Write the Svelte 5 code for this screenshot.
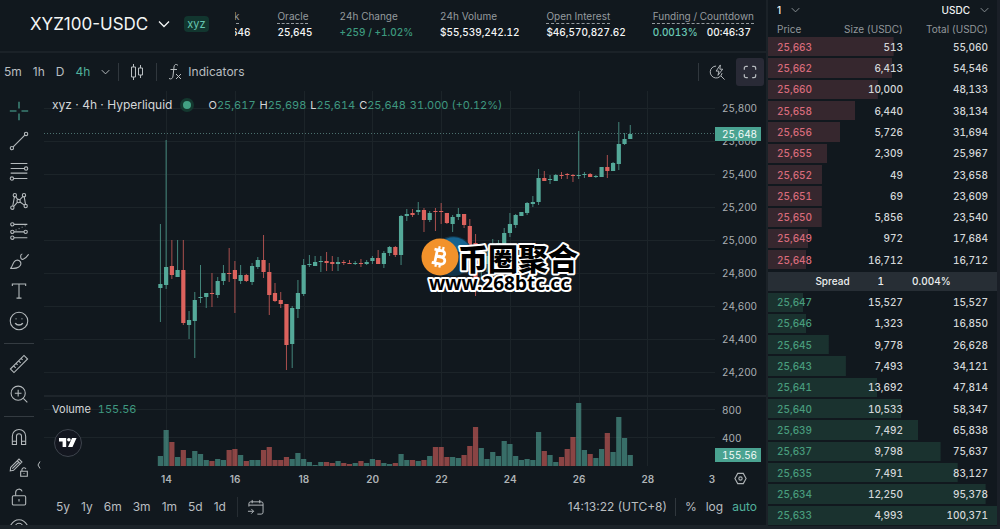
<script>
  // Each candle: high, body top, body bottom, low (plot units), direction
  const candles = [
    [224, 284, 288, 322, 1], [140, 267, 285, 289, 1], [240, 266, 275, 279, 0], [240, 270, 277, 277, 1],
    [240, 270, 323, 325, 0], [311, 320, 325, 339, 1], [292, 300, 321, 358, 1], [265, 297, 298, 303, 1],
    [293, 293, 297, 308, 1], [273, 293, 294, 307, 0], [277, 281, 295, 298, 1], [265, 273, 281, 285, 1],
    [248, 273, 274, 282, 0], [261, 270, 279, 313, 0], [265, 275, 281, 284, 1], [274, 275, 281, 282, 0],
    [263, 266, 282, 285, 1], [257, 260, 267, 269, 1], [235, 260, 272, 278, 0], [263, 272, 295, 315, 0],
    [283, 293, 301, 302, 0], [292, 300, 304, 308, 0], [304, 304, 345, 370, 0], [306, 308, 344, 368, 1],
    [280, 293, 309, 318, 1], [259, 265, 294, 296, 1], [255, 264, 265, 267, 1], [256, 262, 266, 266, 1],
    [256, 261, 262, 272, 1], [252, 261, 263, 271, 0], [256, 262, 264, 271, 0], [257, 262, 264, 271, 1],
    [260, 262, 263, 265, 0], [260, 263, 264, 264, 0], [261, 263, 264, 265, 1], [259, 263, 264, 267, 0],
    [260, 262, 264, 265, 1], [256, 258, 261, 264, 1], [250, 258, 264, 264, 0], [251, 253, 264, 268, 1],
    [246, 247, 253, 256, 1], [246, 247, 255, 257, 0], [215, 216, 255, 265, 1], [209, 214, 216, 221, 1],
    [209, 213, 215, 217, 0], [202, 210, 212, 215, 1], [208, 210, 220, 232, 0], [211, 213, 220, 222, 1],
    [208, 211, 212, 231, 0], [203, 211, 212, 224, 0], [213, 213, 223, 224, 0], [215, 217, 224, 232, 1],
    [208, 214, 217, 220, 1], [214, 214, 225, 228, 0], [219, 226, 245, 247, 0], [234, 243, 283, 296, 0],
    [252, 262, 272, 280, 1], [250, 256, 264, 272, 1], [239, 250, 258, 262, 1], [240, 243, 252, 256, 1],
    [228, 233, 244, 247, 1], [213, 224, 233, 237, 1], [214, 215, 225, 228, 1], [212, 212, 216, 216, 1],
    [202, 203, 213, 215, 1], [196, 202, 204, 207, 1], [169, 178, 202, 205, 1], [171, 178, 181, 181, 0],
    [175, 179, 180, 184, 1], [174, 175, 181, 181, 1], [172, 175, 176, 179, 0], [173, 174, 175, 179, 0],
    [174, 175, 176, 182, 0], [131, 175, 176, 179, 1], [172, 174, 175, 178, 1], [173, 174, 177, 177, 0],
    [175, 176, 177, 178, 1], [167, 167, 177, 177, 1], [155, 167, 171, 178, 0], [162, 163, 171, 171, 1],
    [122, 144, 164, 170, 1], [133, 139, 144, 145, 1], [125, 134, 139, 139, 1],
  ];
  const volumes = [
    10, 36, 24, 9, 16, 8, 15, 12, 6, 5, 7, 6, 16, 17, 11, 5, 6, 6, 16, 19, 6, 6, 9, 7, 13, 7, 4, 1, 4, 4, 3,
    5, 3, 2, 3, 5, 3, 7, 6, 3, 2, 3, 12, 6, 6, 5, 6, 10, 19, 19, 9, 9, 8, 11, 20, 39, 18, 7, 14, 10, 25, 22,
    10, 6, 7, 6, 34, 15, 11, 4, 9, 17, 29, 63, 16, 12, 8, 17, 33, 14, 49, 28, 11,
  ];
  const step = 5.73;
  const cx = (i) => 160.4 + step * i;
  const days = [14, 16, 18, 20, 22, 24, 26, 28];
  const gridX = days.map((_, i) => Math.round(166 + i * 68.76) + 0.5);
  const gridY = Array.from({ length: 9 }, (_, i) => Math.round(108 + i * 32.95) + 0.5);
  const prices = ['25,800', '25,600', '25,400', '25,200', '25,000', '24,800', '24,600', '24,400', '24,200'];

  const asks = [
    ['25,663', '513', '55,060'], ['25,662', '6,413', '54,546'], ['25,660', '10,000', '48,133'],
    ['25,658', '6,440', '38,134'], ['25,656', '5,726', '31,694'], ['25,655', '2,309', '25,967'],
    ['25,652', '49', '23,658'], ['25,651', '69', '23,609'], ['25,650', '5,856', '23,540'],
    ['25,649', '972', '17,684'], ['25,648', '16,712', '16,712'],
  ];
  const bids = [
    ['25,647', '15,527', '15,527'], ['25,646', '1,323', '16,850'], ['25,645', '9,778', '26,628'],
    ['25,643', '7,493', '34,121'], ['25,641', '13,692', '47,814'], ['25,640', '10,533', '58,347'],
    ['25,639', '7,492', '65,838'], ['25,637', '9,798', '75,637'], ['25,635', '7,491', '83,127'],
    ['25,634', '12,250', '95,378'], ['25,633', '4,993', '100,371'],
  ];
  const num = (s) => Number(s.replace(/,/g, ''));
  const depth = (total) => `${(num(total) / 100371) * 100}%`;

  // Icon drawings on a 24 unit grid
  const toolGroups = [
    [
      ['Crosshair', '<path d="M12 1v8M12 15v8M1 12h8M15 12h8"/>'],
      ['Trend line', '<circle cx="3.500" cy="20.500" r="2"/><circle cx="20.500" cy="3.500" r="2"/><path d="M5 19 19 5"/>'],
      ['Fib retracement', '<path d="M2 3h20M2 9h16M2 14.500h20M6 21h16"/><circle cx="20.500" cy="9" r="2"/><circle cx="3.500" cy="21" r="2"/>'],
      ['Pattern', '<circle cx="4" cy="20" r="2"/><circle cx="7" cy="5" r="2"/><circle cx="11.500" cy="12" r="2"/><circle cx="18" cy="5" r="2"/><circle cx="20" cy="18" r="2"/><path d="m4.500 18 2-11M8 6.800l2.500 3.500M13 10.500l3.800-4M18.300 7l1.500 9M13.200 13.200l5.200 3.700M5.500 18.700l4.700-5.300"/>'],
      ['Forecast', '<circle cx="4" cy="4" r="2"/><path d="M6 4h16M6 13h12M6 20h16"/><circle cx="4" cy="13" r="2"/><circle cx="20" cy="13" r="2"/><circle cx="4" cy="20" r="2"/><path stroke-dasharray="1 3" d="m8 11 13-6"/>'],
      ['Brush', '<path d="M1.500 21c3-1 2.500-9 7.500-10 4-.6 6.500 3 4.500 6.500C11.500 21 7 21 1.500 21ZM14 6.500c0 6 5 4 9.500-2.500M14 6.500c0-2 1-3 2-3"/>'],
      ['Text', '<path d="M4 6V3.500h16V6M12 3.500v17M9 20.500h6"/>'],
      ['Emoji', '<circle cx="12" cy="12" r="10.500"/><path d="M7.500 14.500c2 3 7 3 9 0M8.500 9v1M15.500 9v1" stroke-width="1.800"/>'],
    ],
    [
      ['Measure', '<path d="M1.700 18 18 1.700 22.300 6 6 22.300ZM5.500 14.200l2.500 2.500M8.500 11.200l1.800 1.800M11.500 8.200l2.500 2.500M14.500 5.200 16.300 7"/>'],
      ['Zoom in', '<circle cx="11" cy="11" r="8.500"/><path d="M11 7v8M7 11h8M17.200 17.200 22 22"/>'],
    ],
    [
      ['Magnet', '<path d="M4 21V11a8 8 0 0 1 16 0v10h-5V11a3 3 0 0 0-6 0v10ZM4 17h5M15 17h5"/>'],
      ['Lock drawing', '<path d="m2 12.500 10-10 3.500 3.500-10 10-4 .7ZM10 4.500 13.500 8M4 14l8-8M14 17h8v6h-8ZM15.500 17v-2a2.500 2.500 0 0 1 4.800-.6M18 19.500v1"/>'],
      ['Lock all', '<rect x="4" y="10.500" width="16" height="11" rx="1.500"/><path d="M8 10.500V6.500a4 4 0 0 1 7.800-1.200M12 14.500v3" />'],
      ['Hide', '<path d="M2 10c5-9 15-9 20 0M7.500 12a4.500 4.500 0 0 1 9 0"/>'],
    ],
  ];
  const stats = [
    { label: 'Oracle', value: '25,645', hint: true },
    { label: '24h Change', value: '+259 / +1.02%', tone: 'up' },
    { label: '24h Volume', value: '$55,539,242.12' },
    { label: 'Open Interest', value: '$46,570,827.62', hint: true },
  ];
  const ranges = ['5y', '1y', '6m', '3m', '1m', '5d', '1d'];
</script>

{#snippet chevron()}
  <svg class="chevron" viewBox="0 0 12 8" aria-hidden="true"><path d="m1 1.500 5 5 5-5" /></svg>
{/snippet}

{#snippet rows(list, side)}
  <tbody class={side}>
    {#each list as [price, size, total]}
      <tr style:--depth={depth(total)}><td class="price">{price}</td><td>{size}</td><td>{total}</td></tr>
    {/each}
  </tbody>
{/snippet}

<div class="page">
  <main>
    <header>
      <button class="market"><span>XYZ100-USDC</span>{@render chevron()}</button>
      <span class="badge">xyz</span>
      <dl>
        <div><dt><u>Mark</u></dt><dd>25,646</dd></div>
        {#each stats as s}
          <div><dt>{#if s.hint}<u>{s.label}</u>{:else}{s.label}{/if}</dt><dd class={s.tone}>{s.value}</dd></div>
        {/each}
        <div><dt><u>Funding / Countdown</u></dt><dd class="funding"><span>0.0013%</span><span>00:46:37</span></dd></div>
      </dl>
    </header>

    <div class="chart-bar">
      <div class="frames">
        <button>5m</button><button>1h</button><button>D</button><button class="on">4h</button>
        <button class="more" aria-label="More intervals">{@render chevron()}</button>
      </div>
      <button class="split style" aria-label="Candles">
        <svg viewBox="0 0 14 18"><path d="M3.500 1v3M3.500 14v3M1.500 4h4v10h-4ZM10.500 2v3M10.500 12v3M8.500 5h4v7h-4Z" /></svg>
      </button>
      <button class="split indicators">
        <svg viewBox="0 0 14 18"><path d="M10 2.500C8 .5 6.300 1.500 6 4L5 13c-.3 2.700-1.800 3.500-4 2.500M2.500 6.500h6.500M8 11l5 5M13 11l-5 5" /></svg>
        Indicators
      </button>
      <div class="right">
        <button class="quick" aria-label="Quick search">
          <svg viewBox="0 0 18 18"><path d="M7.500 2.200a6.300 6.300 0 1 0 6.300 7.500M12.500 12.500l4 4M12 1 7.500 7.500h3L9.500 12l5-6.500h-3Z" /></svg>
        </button>
        <button class="full" aria-label="Fullscreen">
          <svg viewBox="0 0 16 16"><path d="M1.500 5.500v-2a2 2 0 0 1 2-2h2M10.500 1.500h2a2 2 0 0 1 2 2v2M14.500 10.500v2a2 2 0 0 1-2 2h-2M5.500 14.500h-2a2 2 0 0 1-2-2v-2" /></svg>
        </button>
      </div>
    </div>

    <div class="workspace">
      <nav>
        {#each toolGroups as group}
          <div class="group">
            {#each group as [name, art]}
              <button aria-label={name} class:cross={name === 'Crosshair'}><svg viewBox="0 0 24 24">{@html art}</svg></button>
            {/each}
          </div>
        {/each}
        <button class="fold" aria-label="Collapse tools"><svg viewBox="0 0 6 10"><path d="M4 1.500 2 5l2 3.500" /></svg></button>
      </nav>

      <section class="chart">
        <div class="panes">
          <div class="plot">
            <svg viewBox="44 91 671 375" preserveAspectRatio="none" aria-hidden="true">
              <g class="grid">
                {#each gridX as x}<path d="M{x} 91V466" />{/each}
                {#each gridY as y}<path d="M44 {y}H715" />{/each}
                <path d="M44 409.500H715M44 437.500H715" />
              </g>
              {#each candles as [hi, top, bottom, lo, up], i}
                <g class={up ? 'rise' : 'fall'}>
                  <rect class="vol" x={cx(i) - 2.6} y={466 - volumes[i]} width="5.200" height={volumes[i]} />
                  <rect class="wick" x={cx(i) - 0.5} y={hi} width="1" height={lo - hi} />
                  <rect class="body" x={cx(i) - 2.1} y={top} width="4.200" height={Math.max(bottom - top, 1)} />
                </g>
              {/each}
              <path class="last" d="M44 133.500H715" />
            </svg>
            <div class="legend">
              <span>xyz · 4h · Hyperliquid</span><i></i>
              <p><span>O<b>25,617</b></span><span>H<b>25,698</b></span><span>L<b>25,614</b></span><span>C<b>25,648</b></span><b>31.000 (+0.12%)</b></p>
            </div>
            <div class="vol-legend">Volume <b>155.56</b></div>
            <a class="tv" href="#chart" aria-label="Chart provider">
              <svg viewBox="0 0 20 12"><path d="M0 1h8v10H4V5H0ZM14.500 1H19.500L15 11h-5Z" /><circle cx="11" cy="3" r="2" /></svg>
            </a>
          </div>
          <div class="axis">
            <div class="prices">{#each prices as p}<span>{p}</span>{/each}</div>
            <div class="vols"><span>800</span><span>400</span></div>
            <output class="tag now">25,648</output>
            <output class="tag vol-now">155.56</output>
          </div>
        </div>
        <div class="times">
          <div class="days">{#each days as d}<span>{d}</span>{/each}<span class="next">3</span></div>
          <button aria-label="Scale settings"><svg viewBox="0 0 14 14"><path d="M4 1.500h6L13 7l-3 5.500H4L1 7Z" /><circle cx="7" cy="7" r="1.800" /></svg></button>
        </div>
        <div class="ranges">
          {#each ranges as r}<button>{r}</button>{/each}
          <button class="goto" aria-label="Go to date">
            <svg viewBox="0 0 18 18"><path d="M2 8V5a2 2 0 0 1 2-2h11a2 2 0 0 1 2 2v9a2 2 0 0 1-2 2h-4M2 6.500h15M5.500 1v3.500M13.500 1v3.500M1 13h6M4.500 10.500 7 13l-2.500 2.500" /></svg>
          </button>
          <div class="scale"><button class="clock">14:13:22 (UTC+8)</button><button>%</button><button>log</button><button class="on">auto</button></div>
        </div>
        <svg class="mark" viewBox="0 0 166 64">
          <circle cx="33" cy="25" r="20" class="shade" />
          <path d="M20 12a19 19 0 0 1 28 1l-2 7H24Z" class="blue" />
          <circle cx="20" cy="26" r="18.500" class="coin" />
          <g transform="rotate(12 20 26)" class="symbol">
            <path d="M16 18.500v15M16 19.500h5a3 3 0 0 1 0 6h-5M16 25.900h6a3.500 3.500 0 0 1 0 7h-6M13 19.500h4M13 32.900h4" />
            <path class="pins" d="M17.500 15.500v4M21.500 15.500v4M17.500 32.500v4M21.500 32.500v4" />
          </g>
          <text x="38" y="39" class="name">币圈聚合</text>
          <text x="9" y="59" class="site">www.268btc.cc</text>
        </svg>
      </section>
    </div>
  </main>

  <aside>
    <div class="choices">
      <label><select aria-label="Price grouping"><option>1</option></select>{@render chevron()}</label>
      <label class="unit"><select aria-label="Unit"><option>USDC</option></select>{@render chevron()}</label>
    </div>
    <table>
      <thead><tr><th>Price</th><th>Size (USDC)</th><th>Total (USDC)</th></tr></thead>
      {@render rows(asks, 'asks')}
      <tbody class="spread"><tr><td>Spread</td><td>1</td><td>0.004%</td></tr></tbody>
      {@render rows(bids, 'bids')}
    </table>
  </aside>
</div>

<style>
  :global(body) { background: #1b2228; }
  .page {
    display: grid;
    grid-template-columns: minmax(0, 1fr) 232px;
    gap: 2px;
    height: 100vh;
    min-height: 480px;
    font: 10px/14px Inter, "Noto Sans CJK SC", sans-serif;
    color: #d4d7d9;
    --bg: #11181e;
    --line: #1e252b;
    --teal: #50b09c;
  }
  button, select { font: inherit; color: inherit; background: none; border: 0; padding: 0; margin: 0; }
  button { cursor: pointer; display: flex; align-items: center; justify-content: center; }
  svg { display: block; fill: none; stroke: currentColor; }
  main { display: flex; flex-direction: column; min-height: 0; margin-bottom: 4px; }
  header {
    display: flex; align-items: center; height: 48px; flex: none;
    background: var(--bg); padding: 0 12px 3px 30px; margin-bottom: 2px;
  }
  .market { font-size: 17px; line-height: 24px; gap: 10px; color: #f3f5f5; white-space: nowrap; }
  .market .chevron { width: 12px; height: 8px; }
  .chevron { width: 9px; height: 6px; stroke-width: 1.3; }
  .badge {
    margin-left: 14px; padding: 1px 3px; border-radius: 4px; line-height: 14px; font-size: 11px;
    background: #12362f; color: #65c5b1;
  }
  dl {
    display: flex; justify-content: flex-end; gap: 27px; margin: 0 0 0 26px; flex: 1; min-width: 0;
    overflow: hidden; white-space: nowrap; font-variant-numeric: tabular-nums;
  }
  dt { color: #959b9f; line-height: 16px; }
  u { text-decoration: underline dashed 1px; text-underline-offset: 3px; }
  dd { margin: 0; color: #f5f6f6; font-weight: 500; line-height: 16px; }
  dd.up { color: #3d9a7e; }
  .funding { display: flex; gap: 9px; }
  .funding span:first-child { color: #69c9b5; }

  .chart-bar { display: flex; align-items: center; height: 38px; flex: none; background: var(--bg); font-size: 12px; color: #b9bec1; }
  .frames { display: flex; gap: 11px; padding-left: 4px; }
  .frames .more { width: 9px; }
  .on { color: var(--teal); }
  .split { height: 18px; border-left: 1px solid #30373d; margin-left: 8px; }
  .style { padding: 0 12px 0 11px; }
  .style + .split { margin-left: 0; }
  .style svg { width: 14px; height: 18px; }
  .indicators { padding-left: 11px; gap: 6px; }
  .indicators svg { width: 14px; height: 18px; }
  .right { margin-left: auto; display: flex; align-items: center; padding-right: 2px; }
  .quick { height: 18px; border-left: 1px solid #30373d; padding: 0 10px; }
  .quick svg { width: 17px; height: 17px; }
  .full { width: 28px; height: 28px; border-radius: 3px; background: #292a36; }
  .full svg { width: 14px; height: 14px; stroke-width: 1.4; }

  .workspace { display: flex; flex: 1; min-height: 0; background: var(--bg); }
  nav { width: 44px; flex: none; padding-top: 5px; overflow: hidden; position: relative; box-sizing: border-box; color: #b4b9bc; }
  .group button { width: 38px; height: 30px; }
  .group svg { width: 20px; height: 20px; stroke-width: 1.3; }
  .group + .group { border-top: 1px solid #343b41; margin: 7px 10px 0 4px; padding-top: 5px; }
  .group + .group button { width: 30px; }
  .group .cross { color: var(--teal); }
  .fold { position: absolute; right: 2px; top: 369px; }
  .fold svg { width: 6px; height: 10px; }

  .chart { flex: 1; min-width: 0; display: flex; flex-direction: column; position: relative; }
  .panes { flex: 1; min-height: 0; display: flex; position: relative; }
  .plot { flex: 1; min-width: 0; position: relative; }
  .plot > svg { width: 100%; height: 100%; stroke: none; }
  .panes::after { content: ''; position: absolute; left: 0; right: 0; top: 81%; height: 2px; background: var(--line); }
  .grid path { stroke: #1c2429; }
  .last { stroke: #4b706e; stroke-dasharray: 1 2; }
  .rise { fill: #54a999; }
  .fall { fill: #dc625d; }
  .vol { opacity: 0.6; }
  .wick { opacity: 0.75; }
  .legend { position: absolute; left: 8px; top: 7px; display: flex; align-items: center; font-size: 12px; white-space: nowrap; }
  .legend i { width: 8px; height: 8px; border-radius: 50%; background: #42a183; border: 3px solid #14382f; margin: 0 14px 0 8px; }
  .legend p { display: flex; gap: 4px; margin: 0; font-size: 11px; font-variant-numeric: tabular-nums; }
  b { font-weight: 400; color: #3f9880; }
  .vol-legend { position: absolute; left: 8px; top: 83%; font-size: 11px; font-variant-numeric: tabular-nums; }
  .vol-legend b { margin-left: 4px; }
  .tv {
    position: absolute; left: 10px; top: 90%; width: 26px; height: 26px; border: 1px solid #3e444d; border-radius: 50%;
    background: #13161f; display: grid; place-items: center;
  }
  .tv svg { width: 18px; height: 11px; fill: #fff; stroke: none; }
  .axis {
    width: 51px; flex: none; display: grid; grid-template-rows: minmax(0, 299fr) minmax(0, 76fr); position: relative;
    color: #aaafb3; font-variant-numeric: tabular-nums;
  }
  .prices { display: flex; flex-direction: column; padding: 1px 0 2px 7px; }
  .prices span { flex: 1; display: flex; align-items: center; }
  .vols { display: flex; flex-direction: column; gap: 14px; padding: 13px 0 0 7px; }
  .tag { position: absolute; left: 0; width: 39px; padding-left: 7px; background: #4aa391; color: #f4faf8; }
  .now { top: 36px; }
  .vol-now { bottom: 4px; }
  .times { height: 25px; flex: none; display: flex; align-items: center; font-weight: 600; color: #aeb3b6; }
  .days { flex: 1; display: flex; padding-left: 88px; }
  .days span { flex: 69; text-align: center; }
  .days .next { flex: 33; text-align: right; }
  .times button { width: 51px; flex: none; }
  .times svg { width: 13px; height: 13px; stroke-width: 1.2; }
  .ranges { height: 32px; flex: none; display: flex; align-items: center; gap: 11px; padding: 0 9px 2px 12px; font-size: 12px; color: #b9bec1; }
  .goto { height: 20px; border-left: 1px solid #262d33; padding-left: 9px; }
  .goto svg { width: 17px; height: 17px; }
  .scale { margin-left: auto; display: flex; align-items: center; gap: 9px; }
  .clock { height: 18px; border-right: 1px solid #30373d; padding-right: 8px; }
  .mark { position: absolute; left: 376px; top: 140px; width: 166px; height: 64px; }
  .shade { fill: #123449; stroke: none; }
  .blue { fill: #17638f; stroke: none; }
  .coin { fill: #f2922b; stroke: none; }
  .symbol { stroke: #fff; stroke-width: 2.8; }
  .pins { stroke-width: 2.2; }
  .mark text { fill: #000; stroke: #fff; stroke-width: 4; stroke-linejoin: round; paint-order: stroke; }
  .name { font: 900 30px "Noto Sans CJK SC", sans-serif; }
  .site { font: 700 19px "Noto Sans", sans-serif; }

  aside { display: flex; flex-direction: column; background: var(--bg); margin-bottom: 3px; min-height: 0; border-right: 3px solid #1a1f27; box-sizing: border-box; }
  .choices { display: flex; justify-content: space-between; align-items: center; height: 20px; flex: none; padding: 0 8px 0 9px; color: #e6e8e9; font-weight: 500; }
  label { display: flex; align-items: center; gap: 10px; color: #8b9195; }
  select { appearance: none; color: #f0f2f2; field-sizing: content; }
  table { flex: 1; display: flex; flex-direction: column; min-height: 0; font-variant-numeric: tabular-nums; }
  thead { height: 14px; padding-top: 2px; flex: none; color: #91979b; }
  tbody { display: flex; flex-direction: column; flex: 11 1 0; min-height: 0; }
  tr { flex: 1; min-height: 0; display: grid; grid-template-columns: 46px 1fr 85px; align-items: center; padding: 0 9px; }
  th { font-weight: 400; padding: 0; text-align: right; white-space: nowrap; }
  td { padding: 0; text-align: right; }
  th:first-child, td:first-child { text-align: left; }
  .asks, .bids { font-weight: 500; }
  .asks tr, .bids tr { background: linear-gradient(var(--bar), var(--bar)) no-repeat 0 1px / var(--depth) calc(100% - 2px); }
  .asks { --bar: #36272e; }
  .bids { --bar: #1a322f; }
  .asks .price { color: #d86b7b; }
  .bids .price { color: #489c7d; }
  .spread { flex: none; height: 19px; margin: 1px 0; background: #272e35; font-weight: 500; color: #eceeef; }
  .spread tr { display: flex; justify-content: center; gap: 28px; padding-right: 8px; }
</style>
